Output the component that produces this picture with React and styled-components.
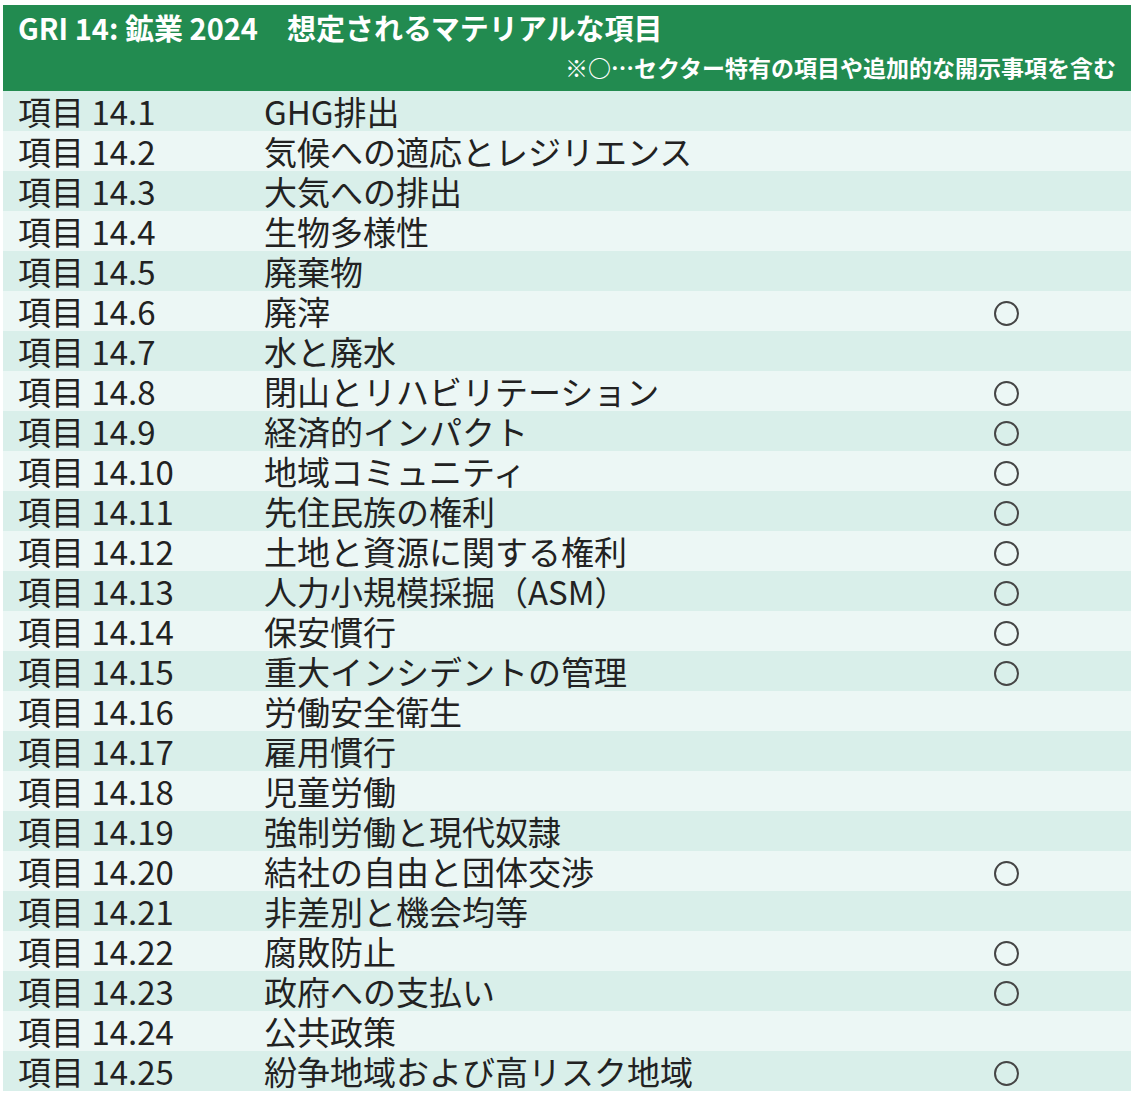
import React from 'react';
import styled, { createGlobalStyle } from 'styled-components';

const items = [
  ['14.1', 'GHG排出', false],
  ['14.2', '気候への適応とレジリエンス', false],
  ['14.3', '大気への排出', false],
  ['14.4', '生物多様性', false],
  ['14.5', '廃棄物', false],
  ['14.6', '廃滓', true],
  ['14.7', '水と廃水', false],
  ['14.8', '閉山とリハビリテーション', true],
  ['14.9', '経済的インパクト', true],
  ['14.10', '地域コミュニティ', true],
  ['14.11', '先住民族の権利', true],
  ['14.12', '土地と資源に関する権利', true],
  ['14.13', '人力小規模採掘（ASM）', true],
  ['14.14', '保安慣行', true],
  ['14.15', '重大インシデントの管理', true],
  ['14.16', '労働安全衛生', false],
  ['14.17', '雇用慣行', false],
  ['14.18', '児童労働', false],
  ['14.19', '強制労働と現代奴隷', false],
  ['14.20', '結社の自由と団体交渉', true],
  ['14.21', '非差別と機会均等', false],
  ['14.22', '腐敗防止', true],
  ['14.23', '政府への支払い', true],
  ['14.24', '公共政策', false],
  ['14.25', '紛争地域および高リスク地域', true],
];

const App = () => (
  <>
    <GlobalStyle />
    <Table>
      <Header>
        <Title>GRI 14: 鉱業 2024　想定されるマテリアルな項目</Title>
        <Note>※○…セクター特有の項目や追加的な開示事項を含む</Note>
      </Header>
      {items.map(([num, name, mark], i) => (
        <Row key={num} odd={i % 2 === 0}>
          <Code>項目 {num}</Code>
          <Name>{name}</Name>
          <Mark>{mark && <Circle />}</Mark>
        </Row>
      ))}
    </Table>
  </>
);

const GlobalStyle = createGlobalStyle`
  body {
    margin: 0;
    background: #ffffff;
    font-family: "Noto Sans CJK JP", "Noto Sans", sans-serif;
  }
`;

const Table = styled.div`
  margin: 5px 3px 0 3px;
  width: 1128px;
  display: flex;
  flex-direction: column;
`;

const Header = styled.div`
  background: #228b50;
  height: 86px;
  padding: 0 15px;
  box-sizing: border-box;
  display: flex;
  flex-direction: column;
  color: #ffffff;
`;

const Title = styled.div`
  font-size: 29px;
  font-weight: 700;
  line-height: 44px;
  white-space: nowrap;
`;

const Note = styled.div`
  align-self: flex-end;
  font-size: 23px;
  font-weight: 700;
  line-height: 30px;
  margin-top: 3px;
  white-space: nowrap;
`;

const Row = styled.div.withConfig({ shouldForwardProp: p => p !== 'odd' })`
  display: grid;
  grid-template-columns: 246px 730px 1fr;
  align-items: center;
  height: 40px;
  padding-left: 15px;
  background: ${p => (p.odd ? '#d9efea' : '#ecf7f5')};
  color: #222222;
  font-size: 33px;
  line-height: 40px;
  white-space: nowrap;
`;

const Code = styled.div``;

const Name = styled.div``;

const Mark = styled.div`
  display: flex;
  align-items: center;
  height: 40px;
`;

const Circle = styled.span`
  width: 21px;
  height: 21px;
  border: 2.5px solid #454545;
  border-radius: 50%;
  margin-top: 4px;
`;

export default App;
